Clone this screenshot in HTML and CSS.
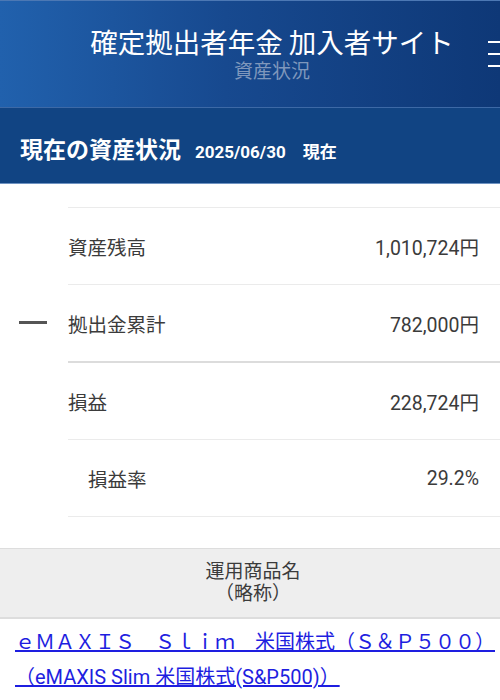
FILE: index.html
```html
<!DOCTYPE html>
<html lang="ja">
<head>
<meta charset="utf-8">
<title>資産状況</title>
<link rel="stylesheet" href="styles.css">
</head>
<body>
<div class="page">
  <header class="site-header">
    <div class="titles">
      <div class="title">確定拠出者年金 加入者サイト</div>
      <div class="subtitle">資産状況</div>
    </div>
    <div class="menu"><span></span><span></span><span></span></div>
  </header>
  <div class="section-bar">
    <span class="section-title">現在の資産状況</span>
    <span class="section-date">2025/06/30　現在</span>
  </div>
  <div class="summary">
    <div class="row">
      <div class="mark"></div>
      <div class="cell"><span class="label">資産残高</span><span class="value">1,010,724円</span></div>
    </div>
    <div class="row">
      <div class="mark"><span class="dash"></span></div>
      <div class="cell"><span class="label">拠出金累計</span><span class="value">782,000円</span></div>
    </div>
    <div class="row">
      <div class="mark"></div>
      <div class="cell strong"><span class="label">損益</span><span class="value">228,724円</span></div>
    </div>
    <div class="row">
      <div class="mark"></div>
      <div class="cell"><span class="label sub">損益率</span><span class="value">29.2%</span></div>
    </div>
    <div class="row end">
      <div class="mark"></div>
      <div class="cell"></div>
    </div>
  </div>
  <div class="table-head">運用商品名<br>（略称）</div>
  <div class="product">
    <a href="#" class="product-link"><span class="wide">ｅＭＡＸＩＳ　Ｓｌｉｍ　米国株式（Ｓ＆Ｐ５００）</span><br>（eMAXIS Slim 米国株式(S&amp;P500)）</a>
  </div>
</div>
</body>
</html>
```
FILE: styles.css
```css
html, body {
  margin: 0;
  padding: 0;
  background: #fff;
}
body {
  font-family: "Roboto", "Noto Sans CJK JP", sans-serif;
  color: #3b3b3b;
  overflow: hidden;
}
.page {
  width: 500px;
  overflow: hidden;
}
.site-header {
  position: relative;
  height: 108px;
  box-sizing: border-box;
  padding: 25px 0 0 44px;
  background: linear-gradient(90deg, #2161ad 0%, #17498f 45%, #0e3877 100%);
  border-top: 1px solid #4c78b4;
  border-bottom: 1px solid #3d69a6;
}
.titles {
  display: flex;
  flex-direction: column;
  align-items: center;
}
.title {
  font-size: 27.5px;
  line-height: 30px;
  color: #fff;
  font-family: "Noto Sans CJK JP", sans-serif;
}
.subtitle {
  margin-top: 3px;
  font-size: 19px;
  line-height: 22px;
  color: #7f97bc;
  font-family: "Noto Sans CJK JP", sans-serif;
}
.menu {
  position: absolute;
  left: 488px;
  top: 40px;
  width: 16px;
  display: flex;
  flex-direction: column;
  gap: 10px;
}
.menu span {
  display: block;
  height: 2px;
  background: #fff;
}
.section-bar {
  height: 76px;
  box-sizing: border-box;
  padding-left: 20px;
  display: flex;
  align-items: baseline;
  padding-top: 24px;
  background: #114483;
  border-bottom: 1px solid #6f93c2;
  color: #fff;
  font-weight: bold;
}
.section-title {
  font-size: 23px;
  line-height: 32px;
  font-family: "Noto Sans CJK JP", sans-serif;
}
.section-date {
  font-size: 17px;
  margin-left: 14px;
}
.summary {
  padding-top: 23px;
}
.row {
  display: flex;
}
.mark {
  width: 68px;
  flex: none;
  display: flex;
  align-items: center;
}
.dash {
  display: block;
  width: 28px;
  height: 3px;
  margin-left: 19px;
  background: #555;
}
.cell {
  flex: 1;
  height: 76px;
  border-top: 1px solid #ebebeb;
  display: flex;
  align-items: center;
  justify-content: space-between;
  padding-right: 21px;
  font-size: 19.5px;
}
.cell.strong {
  border-top: 2px solid #dcdcdc;
  height: 76px;
}
.row.end .cell {
  height: 0;
}
.label.sub {
  padding-left: 20px;
}
.table-head {
  margin-top: 31px;
  padding: 12px 0 12px 6px;
  background: #eeeeee;
  border-top: 1px solid #dddddd;
  border-bottom: 2px solid #dddddd;
  text-align: center;
  font-size: 19px;
  line-height: 22px;
  color: #3b3b3b;
}
.product {
  padding: 6px 0 0 15px;
  font-size: 20px;
  line-height: 35px;
}
.product-link {
  color: #1e1ee0;
  text-decoration: underline;
  white-space: nowrap;
}
.wide {
  letter-spacing: 0;
}
```
